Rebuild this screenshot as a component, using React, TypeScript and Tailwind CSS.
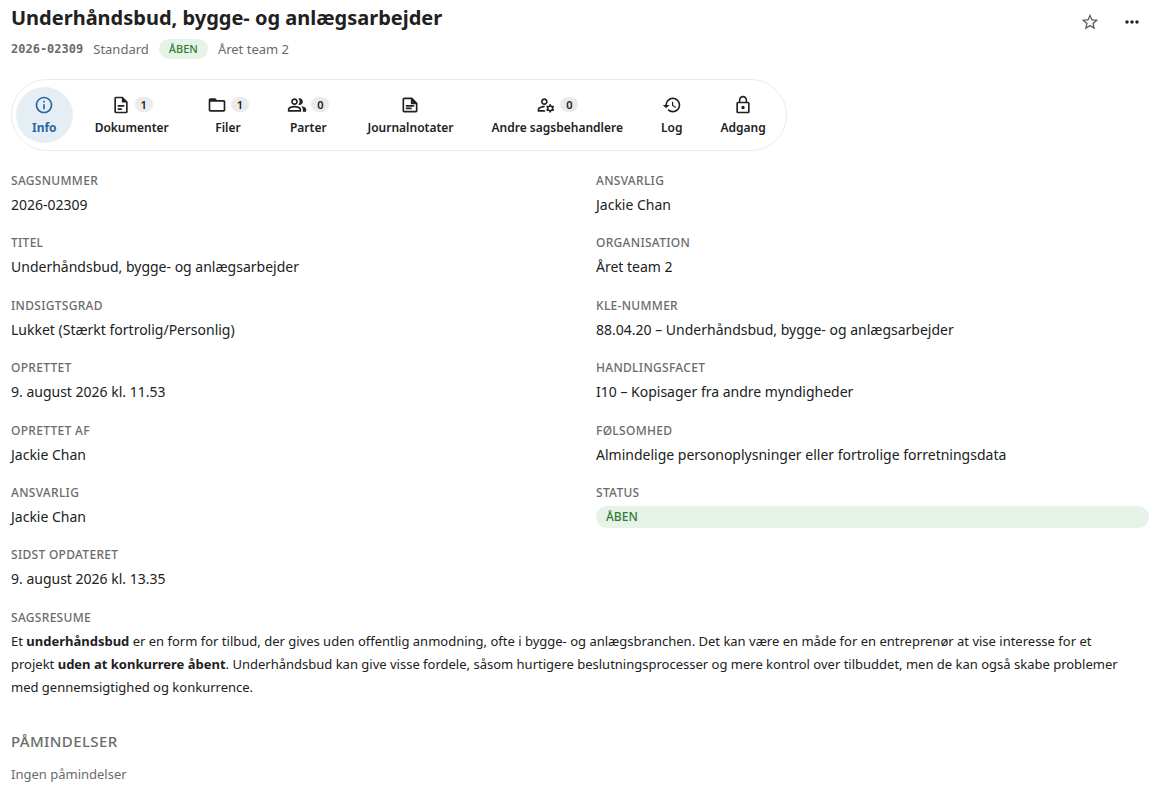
import { useState } from "react"
import type { IconType } from "react-icons"
import {
  MdFolderOpen,
  MdHistory,
  MdLockOutline,
  MdMoreHoriz,
  MdOutlineInfo,
  MdOutlineManageAccounts,
  MdOutlinePeopleAlt,
  MdStarOutline,
} from "react-icons/md"

type IconProps = { size?: number | string }

function DocumentIcon({ size = 20 }: IconProps) {
  return (
    <svg width={size} height={size} viewBox="0 0 24 24" fill="currentColor" aria-hidden="true">
      <path d="M14 2H6a2 2 0 0 0-2 2v16a2 2 0 0 0 2 2h12a2 2 0 0 0 2-2V8l-6-6zM18 20H6V4h7v5h5v11z" />
      <path d="M8 12h8v2H8zM8 16h5v2H8z" />
    </svg>
  )
}

function NoteIcon({ size = 20 }: IconProps) {
  return (
    <svg width={size} height={size} viewBox="0 0 24 24" fill="currentColor" aria-hidden="true">
      <path d="M14.5 3H5a2 2 0 0 0-2 2v14a2 2 0 0 0 2 2h14a2 2 0 0 0 2-2V9.500L14.5 3zM19 19H5V5h8v6h6v8z" />
      <path d="M7 12h10v2H7zM7 15h7v2H7z" />
    </svg>
  )
}

type Tab = { label: string; icon: IconType | typeof NoteIcon; count?: number }

const tabs: Tab[] = [
  { label: "Info", icon: MdOutlineInfo },
  { label: "Dokumenter", icon: DocumentIcon, count: 1 },
  { label: "Filer", icon: MdFolderOpen, count: 1 },
  { label: "Parter", icon: MdOutlinePeopleAlt, count: 0 },
  { label: "Journalnotater", icon: NoteIcon },
  { label: "Andre sagsbehandlere", icon: MdOutlineManageAccounts, count: 0 },
  { label: "Log", icon: MdHistory },
  { label: "Adgang", icon: MdLockOutline },
]

const leftFields = [
  { label: "Sagsnummer", value: "2026-02309" },
  { label: "Titel", value: "Underhåndsbud, bygge- og anlægsarbejder" },
  { label: "Indsigtsgrad", value: "Lukket (Stærkt fortrolig/Personlig)" },
  { label: "Oprettet", value: "9. august 2026 kl. 11.53" },
  { label: "Oprettet af", value: "Jackie Chan" },
  { label: "Ansvarlig", value: "Jackie Chan" },
  { label: "Sidst opdateret", value: "9. august 2026 kl. 13.35" },
]

const rightFields = [
  { label: "Ansvarlig", value: "Jackie Chan" },
  { label: "Organisation", value: "Året team 2" },
  { label: "KLE-nummer", value: "88.04.20 – Underhåndsbud, bygge- og anlægsarbejder" },
  { label: "Handlingsfacet", value: "I10 – Kopisager fra andre myndigheder" },
  { label: "Følsomhed", value: "Almindelige personoplysninger eller fortrolige forretningsdata" },
]

function Field({ label, children }: { label: string; children: React.ReactNode }) {
  return (
    <div>
      <dt className="text-xs leading-[18px] font-medium uppercase tracking-wide text-[#6b6b6b]">{label}</dt>
      <dd className="mt-1 text-sm leading-[1.6]">{children}</dd>
    </div>
  )
}

export default function App() {
  const [activeTab, setActiveTab] = useState("Info")

  return (
    <main className="bg-white pt-1 pr-[19px] pb-4 pl-[11px] font-['Noto_Sans',sans-serif] text-[#212121]">
      <header className="flex items-start justify-between">
        <div>
          <h1 className="text-xl leading-7 font-bold">Underhåndsbud, bygge- og anlægsarbejder</h1>
          <div className="mt-[7px] flex items-center gap-[10px] text-[13px] leading-5 text-[#6b6b6b]">
            <span className="font-['DejaVu_Sans_Mono',monospace] text-xs font-bold">2026-02309</span>
            <span>Standard</span>
            <span className="rounded-full bg-[#e8f3e8] px-[10px] text-[11px] leading-5 font-medium text-[#2e7d32]">ÅBEN</span>
            <span>Året team 2</span>
          </div>
        </div>
        <div className="flex gap-[22px] pt-2 pr-[7px]">
          <button type="button" aria-label="Favorit" className="text-[#616161]">
            <MdStarOutline size={20} />
          </button>
          <button type="button" aria-label="Flere handlinger">
            <MdMoreHoriz size={20} />
          </button>
        </div>
      </header>

      <nav className="mt-5 flex w-fit gap-1.5 rounded-full border border-[#ebebeb] px-1 py-[7px]">
        {tabs.map(({ label, icon: Icon, count }) => (
          <button
            key={label}
            type="button"
            aria-current={activeTab === label ? "page" : undefined}
            onClick={() => setActiveTab(label)}
            className={`flex h-14 flex-col items-center justify-center gap-[5px] rounded-full px-4 text-xs leading-4 ${
              activeTab === label ? "bg-[#e6eef5] font-bold text-[#2b66a0]" : "font-semibold"
            }`}
          >
            <span className="flex items-center gap-1">
              <Icon size={20} />
              {count !== undefined && (
                <span className="rounded-full bg-[#ebebeb] px-[6px] text-[11px] leading-[15px] font-semibold">{count}</span>
              )}
            </span>
            {label}
          </button>
        ))}
      </nav>

      <div className="mt-[21px] grid grid-cols-2 gap-x-8">
        <dl className="flex flex-col gap-[18px]">
          {leftFields.map((field) => (
            <Field key={field.label} label={field.label}>
              {field.value}
            </Field>
          ))}
        </dl>
        <dl className="flex flex-col gap-[18px]">
          {rightFields.map((field) => (
            <Field key={field.label} label={field.label}>
              {field.value}
            </Field>
          ))}
          <Field label="Status">
            <span className="block rounded-full bg-[#e8f3e8] px-[10px] text-xs leading-[22px] font-medium text-[#2e7d32]">
              ÅBEN
            </span>
          </Field>
        </dl>
      </div>

      <section className="mt-[18px]">
        <h2 className="text-xs leading-[18px] font-medium uppercase tracking-wide text-[#6b6b6b]">Sagsresume</h2>
        <p className="mt-[3px] pr-4 text-[13px] leading-[23px]">
          Et <strong>underhåndsbud</strong> er en form for tilbud, der gives uden offentlig anmodning, ofte i bygge- og
          anlægsbranchen. Det kan være en måde for en entreprenør at vise interesse for et projekt{" "}
          <strong>uden at konkurrere åbent</strong>. Underhåndsbud kan give visse fordele, såsom hurtigere
          beslutningsprocesser og mere kontrol over tilbuddet, men de kan også skabe problemer med gennemsigtighed og
          konkurrence.
        </p>
      </section>

      <section className="mt-8">
        <h2 className="text-[15px] leading-5 font-medium uppercase tracking-wide text-[#6b6b6b]">Påmindelser</h2>
        <p className="mt-[13px] text-[13px] leading-5 text-[#6b6b6b]">Ingen påmindelser</p>
      </section>
    </main>
  )
}
